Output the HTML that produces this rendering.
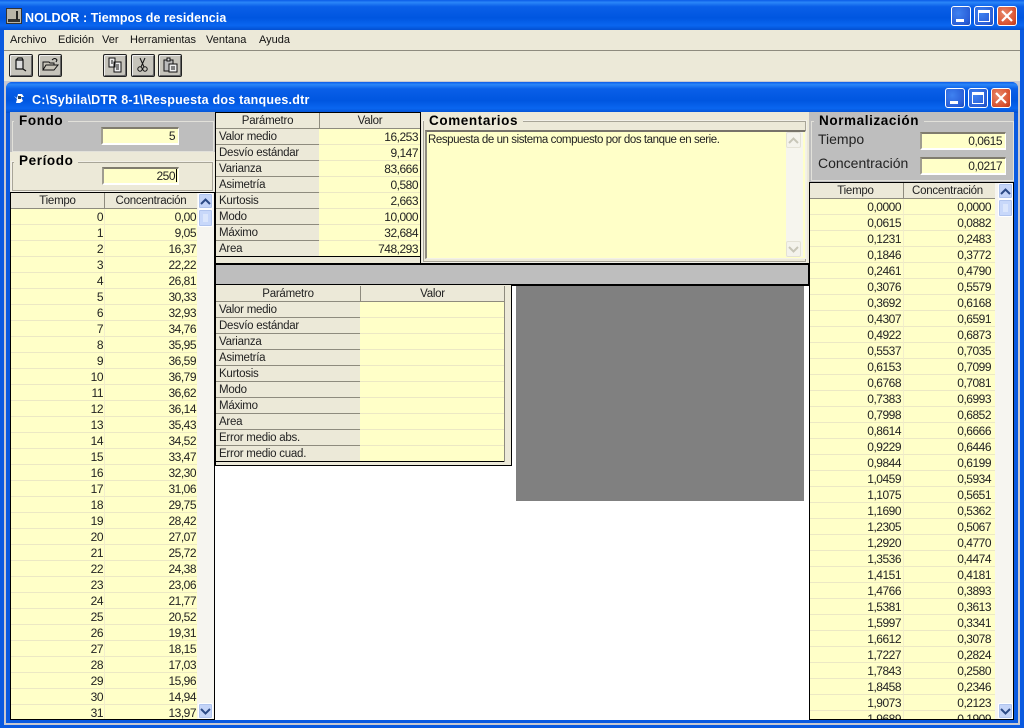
<!DOCTYPE html>
<html><head><meta charset="utf-8"><style>
html,body{margin:0;padding:0;width:1024px;height:728px;overflow:hidden;background:#0a5ae0}
*{box-sizing:border-box}
body{font:11px "Liberation Sans",sans-serif;color:#000;position:relative}
.a{position:absolute}
.tb{background:linear-gradient(#0a5be8 0,#2b86f8 8%,#0a5fe8 22%,#0056e0 60%,#0a66f0 85%,#0350d0 100%)}
.tt{color:#fff;font:bold 12.5px "Liberation Sans",sans-serif;white-space:nowrap}
.wb{width:20px;height:20px;border:1px solid #fff;border-radius:3px;background:radial-gradient(circle at 35% 35%,#3f82f0,#2a5fd8 70%,#1d49b8)}
.wb.x{background:radial-gradient(circle at 35% 35%,#e8886a,#d8502e 70%,#b8381a)}
.tbtn{height:23px;background:#c6c4bb;border:1px solid #222;border-radius:2px;box-shadow:inset 1px 1px 0 #eee,inset -1px -1px 0 #666}
.tbtn svg{position:absolute;left:3px;top:2px}
.m{position:absolute;top:34px;font-size:11px;white-space:nowrap;color:#111}
.gl{font:bold 13.5px "Liberation Sans",sans-serif;letter-spacing:.6px;white-space:nowrap;padding:0 5px;position:absolute;line-height:17px}
.gb{position:absolute;border:1px solid #f2f0e8;outline:1px solid #a8a598;outline-offset:-2px}
.gb.g{border-color:#e2e1da;outline:0}
.in{position:absolute;background:#ffffc8;border-top:2px solid #807c6e;border-left:2px solid #a09d90;border-right:1px solid #fff;border-bottom:2px solid #fff;text-align:right;font-size:12px;letter-spacing:-.5px;line-height:15px;padding-right:3px;color:#222}
.grid{position:absolute;border:1px solid #000;overflow:hidden;background:#f6f5f0}
.h,.r{display:flex;height:16px;line-height:17px}
.h span{background:#ece9d8;border-bottom:1px solid #8e8b7e;text-align:center;height:16px;display:block;color:#222;font-size:11.5px;letter-spacing:-.25px}
.h span+span{border-left:1px solid #8e8b7e}
.r span{background:#ffffc8;border-bottom:1px solid #ece8c4;display:block;height:16px;text-align:right;padding-right:1px;font-size:12px;letter-spacing:-.5px;color:#222}
.r span+span{border-left:1px solid #f2eecb}
.c1 span:nth-child(1){width:93px}.c1 span:nth-child(2){width:93px}
.c2 span:nth-child(1){width:93px;padding-right:2px}.c2 span:nth-child(2){width:92px;padding-right:4px}
.p{height:16px;display:flex;line-height:17px}
.p b{font-weight:normal;display:block;background:#ece9d8;border-bottom:1px solid #8e8b7e;height:16px;padding-left:3px;color:#222;font-size:11.5px;letter-spacing:-.25px}
.p i{font-style:normal;display:block;background:#ffffc8;border-bottom:1px solid #ece8c4;height:16px;text-align:right;padding-right:2px;font-size:12px;letter-spacing:-.5px;color:#222}
.sb{position:absolute;width:15px;height:16px;background:#c4d4f8;border:1px solid #fff;border-radius:2px;box-shadow:inset 0 0 0 1px #b0c4ee}
.sb svg{position:absolute;left:1px;top:3px}
</style></head><body>
<div class="a tb" style="left:0;top:0;width:1024px;height:30px"></div>
<div class="a" style="left:6px;top:8px;width:16px;height:16px;background:#b8b4a8;border:1px solid #333"><div class="a" style="left:1px;bottom:1px;width:12px;height:3px;background:#333"></div><div class="a" style="left:9px;top:2px;width:2px;height:9px;background:#222"></div></div>
<div class="a tt" style="left:25px;top:11px;letter-spacing:.05px">NOLDOR : Tiempos de residencia</div>
<div class="a wb" style="left:951px;top:6px"><div class="a" style="left:4px;bottom:3px;width:8px;height:3px;background:#fff"></div></div>
<div class="a wb" style="left:974px;top:6px"><div class="a" style="left:3px;top:3px;width:12px;height:12px;border:1px solid #fff;border-top-width:3px"></div></div>
<div class="a wb x" style="left:997px;top:6px"><svg class="a" style="left:2px;top:2px" width="14" height="14"><path d="M2 2L12 12M12 2L2 12" stroke="#fff" stroke-width="2.2"/></svg></div>

<div class="a" style="left:4px;top:30px;width:1016px;height:51px;background:#ece9d8"></div>
<div class="a" style="left:4px;top:50px;width:1016px;height:1px;background:#8e8b7e"></div>
<div class="m" style="left:10px">Archivo</div><div class="m" style="left:58px">Edición</div><div class="m" style="left:102px">Ver</div><div class="m" style="left:130px">Herramientas</div><div class="m" style="left:206px">Ventana</div><div class="m" style="left:259px">Ayuda</div>

<div class="a tbtn" style="left:9px;top:54px;width:24px"><svg width="16" height="16"><path d="M3 3H10V12H3ZM3 3L5 1H9L10 3M10 12L13 14" fill="#ddd" stroke="#111" stroke-width="1.2"/></svg></div>
<div class="a tbtn" style="left:38px;top:54px;width:24px"><svg width="18" height="16"><path d="M1 13V5H7L8 6H12V8M1 13L4 8H16L12 13Z" fill="#c8c4b8" stroke="#111"/><path d="M10 3Q13 0 15 3L14 5" fill="none" stroke="#111"/></svg></div>
<div class="a tbtn" style="left:103px;top:54px;width:24px"><svg width="18" height="16"><path d="M2 1H8V10H2ZM7 5H14V15H7Z" fill="#eee" stroke="#111"/><path d="M9 8H12M9 10H12M9 12H12M4 4H6M4 6H6" stroke="#111"/></svg></div>
<div class="a tbtn" style="left:131px;top:54px;width:24px"><svg width="16" height="16"><path d="M5 1L9 10M10 1L6 10" stroke="#111" fill="none"/><circle cx="5" cy="12" r="2.2" fill="none" stroke="#111"/><circle cx="10" cy="12" r="2.2" fill="none" stroke="#111"/></svg></div>
<div class="a tbtn" style="left:158px;top:54px;width:24px"><svg width="18" height="16"><path d="M2 3H11V14H2Z" fill="#bbb" stroke="#111"/><path d="M5 1H8V4H5Z" fill="#ddd" stroke="#111"/><path d="M7 7H15V15H7Z" fill="#eee" stroke="#111"/><path d="M9 10H13M9 12H13" stroke="#111"/></svg></div>

<div class="a" style="left:4px;top:81px;width:1016px;height:644px;background:#c8c8d0"></div>
<div class="a tb" style="left:6px;top:82px;width:1012px;height:641px;border-radius:6px 6px 0 0;background:#0a5ae0"></div>
<div class="a tb" style="left:6px;top:82px;width:1012px;height:31px;border-radius:6px 6px 0 0"></div>
<svg class="a" style="left:13px;top:92px" width="14" height="13"><path d="M1 4L4 6L5 2H9L11 5H8L10 9L7 11H3L4 7Z" fill="#fff"/><path d="M5 4H8V7H5Z" fill="#345"/></svg>
<div class="a tt" style="left:32px;top:93px;letter-spacing:.22px">C:\Sybila\DTR 8-1\Respuesta dos tanques.dtr</div>
<div class="a wb" style="left:945px;top:88px"><div class="a" style="left:4px;bottom:3px;width:8px;height:3px;background:#fff"></div></div>
<div class="a wb" style="left:968px;top:88px"><div class="a" style="left:3px;top:3px;width:12px;height:12px;border:1px solid #fff;border-top-width:3px"></div></div>
<div class="a wb x" style="left:991px;top:88px"><svg class="a" style="left:2px;top:2px" width="14" height="14"><path d="M2 2L12 12M12 2L2 12" stroke="#fff" stroke-width="2.2"/></svg></div>

<div class="a" style="left:10px;top:112px;width:1004px;height:608px;background:#fff"></div>

<!-- Fondo / Periodo -->
<div class="a" style="left:10px;top:112px;width:205px;height:40px;background:#bebebe"></div>
<div class="gb g" style="left:12px;top:121px;width:202px;height:31px"></div>
<div class="gl" style="left:14px;top:112px;background:#bebebe">Fondo</div>
<div class="in" style="left:101px;top:127px;width:78px;height:18px">5</div>
<div class="a" style="left:10px;top:152px;width:205px;height:40px;background:#ece9d8"></div>
<div class="gb" style="left:11px;top:161px;width:203px;height:31px"></div>
<div class="gl" style="left:14px;top:152px;background:#ece9d8">Período</div>
<div class="in" style="left:102px;top:167px;width:77px;height:18px">250</div>
<div class="a" style="left:176px;top:169px;width:1px;height:13px;background:#000"></div>

<!-- Left grid -->
<div class="grid" style="left:10px;top:192px;width:205px;height:528px">
<div class="h c1"><span>Tiempo</span><span>Concentración</span></div>
<div class="r c1"><span>0</span><span>0,00</span></div>
<div class="r c1"><span>1</span><span>9,05</span></div>
<div class="r c1"><span>2</span><span>16,37</span></div>
<div class="r c1"><span>3</span><span>22,22</span></div>
<div class="r c1"><span>4</span><span>26,81</span></div>
<div class="r c1"><span>5</span><span>30,33</span></div>
<div class="r c1"><span>6</span><span>32,93</span></div>
<div class="r c1"><span>7</span><span>34,76</span></div>
<div class="r c1"><span>8</span><span>35,95</span></div>
<div class="r c1"><span>9</span><span>36,59</span></div>
<div class="r c1"><span>10</span><span>36,79</span></div>
<div class="r c1"><span>11</span><span>36,62</span></div>
<div class="r c1"><span>12</span><span>36,14</span></div>
<div class="r c1"><span>13</span><span>35,43</span></div>
<div class="r c1"><span>14</span><span>34,52</span></div>
<div class="r c1"><span>15</span><span>33,47</span></div>
<div class="r c1"><span>16</span><span>32,30</span></div>
<div class="r c1"><span>17</span><span>31,06</span></div>
<div class="r c1"><span>18</span><span>29,75</span></div>
<div class="r c1"><span>19</span><span>28,42</span></div>
<div class="r c1"><span>20</span><span>27,07</span></div>
<div class="r c1"><span>21</span><span>25,72</span></div>
<div class="r c1"><span>22</span><span>24,38</span></div>
<div class="r c1"><span>23</span><span>23,06</span></div>
<div class="r c1"><span>24</span><span>21,77</span></div>
<div class="r c1"><span>25</span><span>20,52</span></div>
<div class="r c1"><span>26</span><span>19,31</span></div>
<div class="r c1"><span>27</span><span>18,15</span></div>
<div class="r c1"><span>28</span><span>17,03</span></div>
<div class="r c1"><span>29</span><span>15,96</span></div>
<div class="r c1"><span>30</span><span>14,94</span></div>
<div class="r c1"><span>31</span><span>13,97</span></div>
</div>
<div class="sb" style="left:198px;top:193px"><svg width="11" height="9"><path d="M1 7L5.500 2.500L10 7" fill="none" stroke="#2c4a86" stroke-width="2"/></svg></div>
<div class="sb" style="left:198px;top:209px;height:18px;background:#c8d8fa"><svg width="11" height="10"><path d="M3 2H8M3 4H8M3 6H8M3 8H8" stroke="#eef3ff" stroke-width="1"/></svg></div>
<div class="sb" style="left:198px;top:703px"><svg width="11" height="9"><path d="M1 2L5.500 6.500L10 2" fill="none" stroke="#2c4a86" stroke-width="2"/></svg></div>

<!-- top param table -->
<div class="a" style="left:215px;top:112px;width:206px;height:153px;background:#ece9d8;border:1px solid #000"></div>
<div class="a" style="left:216px;top:113px;width:204px">
<div class="h"><span style="width:103px">Parámetro</span><span style="width:101px">Valor</span></div>
<div class="p"><b style="width:103px">Valor medio</b><i style="width:101px">16,253</i></div>
<div class="p"><b style="width:103px">Desvío estándar</b><i style="width:101px">9,147</i></div>
<div class="p"><b style="width:103px">Varianza</b><i style="width:101px">83,666</i></div>
<div class="p"><b style="width:103px">Asimetría</b><i style="width:101px">0,580</i></div>
<div class="p"><b style="width:103px">Kurtosis</b><i style="width:101px">2,663</i></div>
<div class="p"><b style="width:103px">Modo</b><i style="width:101px">10,000</i></div>
<div class="p"><b style="width:103px">Máximo</b><i style="width:101px">32,684</i></div>
<div class="p"><b style="width:103px">Area</b><i style="width:101px">748,293</i></div>
</div>
<div class="a" style="left:216px;top:256px;width:204px;height:1px;background:#000"></div>

<!-- Comentarios -->
<div class="a" style="left:421px;top:112px;width:388px;height:152px;background:#ece9d8"></div>
<div class="gb" style="left:422px;top:120px;width:385px;height:143px"></div>
<div class="gl" style="left:424px;top:112px;background:#ece9d8">Comentarios</div>
<div class="a" style="left:425px;top:130px;width:381px;height:129px;background:#ffffc8;border-top:2px solid #77736a;border-left:2px solid #8f8c80;border-right:1px solid #f4f2e8;border-bottom:1px solid #f4f2e8"></div>
<div class="a" style="left:428px;top:134px;font-size:11.5px;letter-spacing:-.43px;line-height:13px;white-space:nowrap;color:#222">Respuesta de un sistema compuesto por dos tanque en serie.</div>
<div class="a" style="left:786px;top:132px;width:17px;height:125px;background:#f6f5ee"></div>
<div class="sb" style="left:786px;top:132px;background:#f4f3ec;border-color:#e4e2d6;box-shadow:none"><svg width="11" height="9"><path d="M1 7L5.500 2.500L10 7" fill="none" stroke="#c8c6b8" stroke-width="2"/></svg></div>
<div class="sb" style="left:786px;top:241px;background:#f4f3ec;border-color:#e4e2d6;box-shadow:none"><svg width="11" height="9"><path d="M1 2L5.500 6.500L10 2" fill="none" stroke="#c8c6b8" stroke-width="2"/></svg></div>

<!-- grey bar -->
<div class="a" style="left:215px;top:263px;width:595px;height:23px;background:#bebebe;border:1px solid #000;border-width:2px 2px 2px 1px"></div>

<!-- lower table -->
<div class="a" style="left:215px;top:285px;width:297px;height:181px;background:#ece9d8;border:1px solid #000;border-top:0"></div>
<div class="a" style="left:216px;top:286px;width:288px">
<div class="h"><span style="width:144px">Parámetro</span><span style="width:144px">Valor</span></div>
<div class="p"><b style="width:144px">Valor medio</b><i style="width:144px"></i></div>
<div class="p"><b style="width:144px">Desvío estándar</b><i style="width:144px"></i></div>
<div class="p"><b style="width:144px">Varianza</b><i style="width:144px"></i></div>
<div class="p"><b style="width:144px">Asimetría</b><i style="width:144px"></i></div>
<div class="p"><b style="width:144px">Kurtosis</b><i style="width:144px"></i></div>
<div class="p"><b style="width:144px">Modo</b><i style="width:144px"></i></div>
<div class="p"><b style="width:144px">Máximo</b><i style="width:144px"></i></div>
<div class="p"><b style="width:144px">Area</b><i style="width:144px"></i></div>
<div class="p"><b style="width:144px">Error medio abs.</b><i style="width:144px"></i></div>
<div class="p"><b style="width:144px">Error medio cuad.</b><i style="width:144px"></i></div>
</div>
<div class="a" style="left:216px;top:461px;width:288px;height:1px;background:#000"></div>
<div class="a" style="left:504px;top:286px;width:1px;height:176px;background:#8e8b7e"></div>

<!-- grey plot -->
<div class="a" style="left:516px;top:286px;width:288px;height:215px;background:#808080"></div>

<!-- Normalizacion -->
<div class="a" style="left:809px;top:112px;width:205px;height:70px;background:#bebebe"></div>
<div class="gb g" style="left:811px;top:121px;width:203px;height:60px"></div>
<div class="gl" style="left:814px;top:112px;background:#bebebe">Normalización</div>
<div class="a" style="left:818px;top:131px;font-size:14px;white-space:nowrap;color:#222">Tiempo</div>
<div class="a" style="left:818px;top:155px;font-size:14px;white-space:nowrap;color:#222">Concentración</div>
<div class="in" style="left:920px;top:132px;width:86px;height:18px">0,0615</div>
<div class="in" style="left:920px;top:157px;width:86px;height:18px">0,0217</div>

<!-- Right grid -->
<div class="grid" style="left:809px;top:182px;width:205px;height:538px">
<div class="h c2"><span>Tiempo</span><span>Concentración</span></div>
<div class="r c2"><span>0,0000</span><span>0,0000</span></div>
<div class="r c2"><span>0,0615</span><span>0,0882</span></div>
<div class="r c2"><span>0,1231</span><span>0,2483</span></div>
<div class="r c2"><span>0,1846</span><span>0,3772</span></div>
<div class="r c2"><span>0,2461</span><span>0,4790</span></div>
<div class="r c2"><span>0,3076</span><span>0,5579</span></div>
<div class="r c2"><span>0,3692</span><span>0,6168</span></div>
<div class="r c2"><span>0,4307</span><span>0,6591</span></div>
<div class="r c2"><span>0,4922</span><span>0,6873</span></div>
<div class="r c2"><span>0,5537</span><span>0,7035</span></div>
<div class="r c2"><span>0,6153</span><span>0,7099</span></div>
<div class="r c2"><span>0,6768</span><span>0,7081</span></div>
<div class="r c2"><span>0,7383</span><span>0,6993</span></div>
<div class="r c2"><span>0,7998</span><span>0,6852</span></div>
<div class="r c2"><span>0,8614</span><span>0,6666</span></div>
<div class="r c2"><span>0,9229</span><span>0,6446</span></div>
<div class="r c2"><span>0,9844</span><span>0,6199</span></div>
<div class="r c2"><span>1,0459</span><span>0,5934</span></div>
<div class="r c2"><span>1,1075</span><span>0,5651</span></div>
<div class="r c2"><span>1,1690</span><span>0,5362</span></div>
<div class="r c2"><span>1,2305</span><span>0,5067</span></div>
<div class="r c2"><span>1,2920</span><span>0,4770</span></div>
<div class="r c2"><span>1,3536</span><span>0,4474</span></div>
<div class="r c2"><span>1,4151</span><span>0,4181</span></div>
<div class="r c2"><span>1,4766</span><span>0,3893</span></div>
<div class="r c2"><span>1,5381</span><span>0,3613</span></div>
<div class="r c2"><span>1,5997</span><span>0,3341</span></div>
<div class="r c2"><span>1,6612</span><span>0,3078</span></div>
<div class="r c2"><span>1,7227</span><span>0,2824</span></div>
<div class="r c2"><span>1,7843</span><span>0,2580</span></div>
<div class="r c2"><span>1,8458</span><span>0,2346</span></div>
<div class="r c2"><span>1,9073</span><span>0,2123</span></div>
<div class="r c2"><span>1,9689</span><span>0,1909</span></div>
</div>
<div class="sb" style="left:998px;top:183px"><svg width="11" height="9"><path d="M1 7L5.500 2.500L10 7" fill="none" stroke="#2c4a86" stroke-width="2"/></svg></div>
<div class="sb" style="left:998px;top:199px;height:18px;background:#c8d8fa"><svg width="11" height="10"><path d="M3 2H8M3 4H8M3 6H8M3 8H8" stroke="#eef3ff" stroke-width="1"/></svg></div>
<div class="sb" style="left:998px;top:703px"><svg width="11" height="9"><path d="M1 2L5.500 6.500L10 2" fill="none" stroke="#2c4a86" stroke-width="2"/></svg></div>
</body></html>
